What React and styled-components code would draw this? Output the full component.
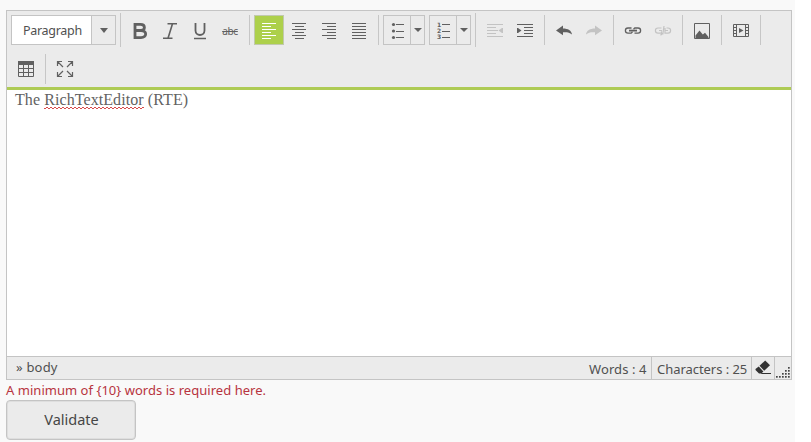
import React from "react";
import styled, { createGlobalStyle } from "styled-components";

const Global = createGlobalStyle`
  * { box-sizing: border-box; }
  html { background: #fff; overflow: hidden; }
  body { margin: 0; font-family: "Noto Sans", "Open Sans", sans-serif; color: #505050; }
`;

const Page = styled.main`
  width: 795px;
  height: 442px;
  padding: 10px 3px 0 6px;
  background: #f9f9f9;
  overflow: hidden;
`;

const Editor = styled.section`
  width: 786px;
  height: 370px;
  display: flex;
  flex-direction: column;
  border: 1px solid #c4c4c4;
  background: #fff;
`;

const Toolbar = styled.header`
  flex: none;
  height: 79px;
  padding: 0 4px;
  background: #ebebeb;
  border-bottom: 3px solid #aecb55;
`;

const ToolRow = styled.div`
  display: flex;
  align-items: center;
  height: ${(p) => p.$height}px;
`;

const Group = styled.div`
  display: flex;
  align-items: center;
  gap: ${(p) => p.$gap || 0}px;
  height: ${(p) => (p.$tall ? 34 : 30)}px;
  padding-right: 4px;
  margin-right: 4px;
  border-right: ${(p) => (p.$last ? "0" : "1px solid #c6c6c6")};
`;

const Tool = styled.button`
  width: 30px;
  height: 30px;
  padding: 0;
  display: flex;
  align-items: center;
  justify-content: center;
  border: 1px solid ${(p) => (p.$active ? "#c1c9ad" : "transparent")};
  background: ${(p) => (p.$active ? "#add04b" : "transparent")};
  color: ${(p) => (p.$active ? "#fff" : p.$off ? "#c3c3c3" : "#606060")};
`;

const Select = styled.div`
  display: flex;
  width: 105px;
  height: 30px;
  border: 1px solid #c4c4c4;
  background: #fff;
`;

const SelectText = styled.span`
  width: 79px;
  padding-left: 11px;
  font-size: 12.5px;
  line-height: 29px;
  letter-spacing: -0.3px;
  white-space: nowrap;
`;

const Caret = styled.span`
  flex: 1;
  display: flex;
  align-items: center;
  justify-content: center;
  border-left: 1px solid #c4c4c4;
  background: #ebebeb;
  &::after {
    content: "";
    border: ${(p) => (p.$small ? 4 : 4.5)}px solid transparent;
    border-top: ${(p) => (p.$small ? 4.5 : 5)}px solid #606060;
    border-bottom: 0;
  }
`;

const Split = styled.div`
  display: flex;
  width: 42px;
  height: 30px;
  border: 1px solid #c4c4c4;
`;

const SplitIcon = styled.span`
  width: 26px;
  display: flex;
  align-items: center;
  justify-content: center;
  color: #606060;
`;

const Content = styled.article`
  flex: 1;
  padding: 1px 8px;
  font: 16px/18px "Liberation Serif", serif;
  letter-spacing: 0.08px;
  color: #626262;
`;

/* Two offset dotted rows form the tight spell-check zigzag. */
const Misspelled = styled.span`
  padding-bottom: 1px;
  background:
    repeating-linear-gradient(90deg, #d84a4a 0 2px, transparent 2px 4px) 0 100% / 100% 1px no-repeat,
    repeating-linear-gradient(90deg, transparent 0 2px, #d84a4a 2px 4px) 0 calc(100% - 1px) / 100% 1px no-repeat;
`;

const StatusBar = styled.footer`
  flex: none;
  height: 23px;
  display: flex;
  align-items: stretch;
  border-top: 1px solid #c4c4c4;
  background: #ebebeb;
  font-size: 13px;
`;

const TagPath = styled.span`
  flex: 1;
  padding-left: 9px;
  line-height: 20px;
  letter-spacing: 0.2px;
`;

const Count = styled.span`
  width: ${(p) => p.$width}px;
  padding-left: 5px;
  line-height: 24px;
  white-space: nowrap;
  letter-spacing: ${(p) => p.$track}px;
  border-right: 1px solid #c4c4c4;
`;

const StatusIcon = styled.span`
  width: ${(p) => p.$width}px;
  display: flex;
  align-items: ${(p) => (p.$bottom ? "flex-end" : "center")};
  justify-content: center;
  color: #333;
  border-right: ${(p) => (p.$bottom ? "0" : "1px solid #c4c4c4")};
`;

const ErrorText = styled.p`
  margin: 0;
  height: 20px;
  font-size: 13px;
  line-height: 21px;
  color: #b73440;
  letter-spacing: 0.03px;
  white-space: nowrap;
`;

const Validate = styled.button`
  display: block;
  width: 130px;
  height: 40px;
  padding: 0 0 2px 1px;
  border: 1px solid #c4c4c4;
  border-radius: 4px;
  box-shadow: inset 0 0 0 1px #dedede;
  background: #ebebeb;
  color: #464646;
  font: 14.5px "Noto Sans", "Open Sans", sans-serif;
`;

const Strike = styled.span`
  font: 10px/1 "Noto Sans", sans-serif;
  letter-spacing: -0.3px;
  padding-top: 1px;
  text-decoration: line-through;
`;

/* Icons sit on a 30px grid aligned with the button box. */
const Svg = styled.svg`
  display: block;
  flex: none;
  overflow: visible;
`;

function Icon({ children, w = 30, h = 30 }) {
  return (
    <Svg width={w} height={h} viewBox={`0 0 ${w} ${h}`} fill="none" stroke="currentColor">
      {children}
    </Svg>
  );
}

const alignPaths = {
  left: "M8 8.5h14M8 11.5h9M8 14.5h14M8 17.5h9M8 20.5h14M8 23.5h9",
  center: "M8 8.5h14M11 11.5h9M8 14.5h14M11 17.5h9M8 20.5h14M11 23.5h9",
  right: "M8 8.5h14M13 11.5h9M8 14.5h14M13 17.5h9M8 20.5h14M13 23.5h9",
  justify: "M8 8.5h14M8 11.5h14M8 14.5h14M8 17.5h14M8 20.5h14M8 23.5h14",
};

const Align = ({ kind }) => <Icon><path d={alignPaths[kind]} /></Icon>;

const Bold = () => (
  <Icon><path strokeWidth="2.8" d="M10 9.4H15.5c5.200 0 5.200 6.100 0 6.100H10M10 15.500H16c6.200 0 6.200 7.100 0 7.100h-6M10 8v16" /></Icon>
);
const Italic = () => (
  <Icon><path strokeWidth="1.6" d="M12.500 8.700h9.500M8 23.200h9.500M17.500 8.700l-4.500 14.500" /></Icon>
);
const Underline = () => (
  <Icon><path strokeWidth="1.8" d="M10.500 8v7.500c0 6 9 6 9 0V8" /><path strokeWidth="1.500" d="M9 23.500h12" /></Icon>
);
const Indent = ({ out }) => (
  <Icon>
    <path d={out ? "M7 9.5h16M7 12.5h9M7 15.5h11M7 18.5h9M7 21.5h16" : "M7 9.5h16M14 12.5h9M14 15.5h9M14 18.5h9M7 21.5h16"} />
    <path fill="currentColor" stroke="none" d={out ? "M23 13v5h-1l-3.500-2.500 3.500-2.500z" : "M7 13v5h1l3.500-2.500L8 13z"} />
  </Icon>
);
const Undo = () => (
  <Icon><path fill="currentColor" stroke="none" d="M7 15.5l7-5v3c5 0 8.5 2 9 6-2.500-2-5-2.500-9-2.200v3z" /></Icon>
);
const Redo = () => (
  <Icon><path fill="currentColor" stroke="none" d="M23 15.500l-7-5v3c-5 0-8.500 2-9 6 2.500-2 5-2.500 9-2.200v3z" /></Icon>
);
const Link = () => (
  <Icon><path strokeWidth="1.300" d="M13.500 13H10a2.600 2.600 0 000 5.200h3.200l1.300-1.400M16.500 18.200H20a2.600 2.600 0 000-5.200h-3.200L15.500 14.300" /><path strokeWidth="1.800" d="M11 15.600h8" /></Icon>
);
const Unlink = () => (
  <Icon><path strokeWidth="1.200" d="M13.500 13H10a2.600 2.600 0 000 5.200h3.500v-2M11 15.500h3M16 11l-1.200 8.500M17 13v5.200h3a2.600 2.600 0 000-5.200h-1.500M17 15.500h3M12.500 20.300l2-1.800" /></Icon>
);
const Picture = () => (
  <Icon><path d="M7.500 8.500h15v15h-15z" /><path fill="currentColor" stroke="none" d="M8.500 23v-2.500L12.500 15.500l3.300 4 2.200-1.800L21.500 22v1z" /></Icon>
);
const Video = () => (
  <Icon>
    <path d="M7.500 9.500h15v12h-15zM10.500 9.500v12M19.500 9.500v12M7.500 12.500h3M7.500 15.500h3M7.500 18.500h3M19.500 12.500h3M19.500 15.500h3M19.500 18.500h3" />
    <path fill="currentColor" stroke="none" d="M13 13l4.500 2.500L13 18z" />
  </Icon>
);
const Table = () => (
  <Icon>
    <path d="M7.500 8.500h15v14h-15zM7 14.500h16M7 18.500h16M12.500 11v12M17.500 11v12" />
    <path fill="currentColor" stroke="none" d="M7 7h16v4H7z" />
  </Icon>
);
const Expand = () => (
  <Icon>
    <path strokeWidth="1.200" d="M7.500 12V7.500H12M7.500 7.500l5.500 5.500M18 7.500h4.500V12M22.500 7.500L17 13M7.500 18v4.500H12M7.500 22.500L13 17M18 22.500h4.500V18M22.500 22.500L17 17" />
  </Icon>
);

const listLines = "M12 8.500h8M12 15.500h8M12 21.500h8";
const Bullets = () => (
  <Icon w={26} h={28}>
    <path d={listLines} />
    <g fill="currentColor" stroke="none"><circle cx="9.500" cy="8.500" r="1.600" /><circle cx="9.500" cy="15" r="1.600" /><circle cx="9.500" cy="21.500" r="1.600" /></g>
  </Icon>
);
const NumberText = styled.text`
  font: bold 6px "DejaVu Sans", sans-serif;
`;
const Numbers = () => (
  <Icon w={26} h={28}>
    <path d={listLines} />
    <g fill="currentColor" stroke="none">
      <NumberText x="7" y="11">1</NumberText>
      <NumberText x="7" y="17">2</NumberText>
      <NumberText x="7" y="23">3</NumberText>
    </g>
  </Icon>
);
const Eraser = () => (
  <Icon w={20} h={20}>
    <g fill="currentColor" stroke="none">
      <path d="M6.500 7.700L12.200 2.500 17 7.300 11.200 12.700z" />
      <path d="M5.700 8.500l4.700 5-2 2H6L2.500 12v-1zM9 15h9v1H8z" />
    </g>
  </Icon>
);
const gripDots = [[12, 1], [9, 4], [12, 4], [6, 7], [9, 7], [12, 7], [3, 10], [6, 10], [9, 10], [12, 10], [0, 10]];
const Grip = () => (
  <Icon w={14} h={13}>
    <g fill="#444" stroke="none">
      {gripDots.map(([x, y]) => <rect key={`${x}-${y}`} x={x} y={y} width="1.700" height="1.700" />)}
    </g>
  </Icon>
);

export default function App() {
  return (
    <>
      <Global />
      <Page>
        <Editor>
          <Toolbar>
            <ToolRow $height={38}>
              <Group $tall>
                <Select><SelectText>Paragraph</SelectText><Caret /></Select>
              </Group>
              <Group>
                <Tool aria-label="Bold"><Bold /></Tool>
                <Tool aria-label="Italic"><Italic /></Tool>
                <Tool aria-label="Underline"><Underline /></Tool>
                <Tool><Strike>abc</Strike></Tool>
              </Group>
              <Group>
                <Tool $active aria-label="Align left"><Align kind="left" /></Tool>
                <Tool aria-label="Align center"><Align kind="center" /></Tool>
                <Tool aria-label="Align right"><Align kind="right" /></Tool>
                <Tool aria-label="Justify"><Align kind="justify" /></Tool>
              </Group>
              <Group $gap={4} $tall>
                <Split><SplitIcon><Bullets /></SplitIcon><Caret $small /></Split>
                <Split><SplitIcon><Numbers /></SplitIcon><Caret $small /></Split>
              </Group>
              <Group>
                <Tool $off aria-label="Outdent"><Indent out /></Tool>
                <Tool aria-label="Indent"><Indent /></Tool>
              </Group>
              <Group>
                <Tool aria-label="Undo"><Undo /></Tool>
                <Tool $off aria-label="Redo"><Redo /></Tool>
              </Group>
              <Group>
                <Tool aria-label="Link"><Link /></Tool>
                <Tool $off aria-label="Remove link"><Unlink /></Tool>
              </Group>
              <Group><Tool aria-label="Image"><Picture /></Tool></Group>
              <Group><Tool aria-label="Video"><Video /></Tool></Group>
            </ToolRow>
            <ToolRow $height={39}>
              <Group><Tool aria-label="Table"><Table /></Tool></Group>
              <Group $last><Tool aria-label="Full screen"><Expand /></Tool></Group>
            </ToolRow>
          </Toolbar>
          <Content>The <Misspelled>RichTextEditor</Misspelled> (RTE)</Content>
          <StatusBar>
            <TagPath>» body</TagPath>
            <Count $width={68} $track={0.1}>Words : 4</Count>
            <Count $width={100} $track={-0.05}>Characters : 25</Count>
            <StatusIcon $width={23}><Eraser /></StatusIcon>
            <StatusIcon $width={16} $bottom><Grip /></StatusIcon>
          </StatusBar>
        </Editor>
        <ErrorText>A minimum of {"{10}"} words is required here.</ErrorText>
        <Validate>Validate</Validate>
      </Page>
    </>
  );
}
